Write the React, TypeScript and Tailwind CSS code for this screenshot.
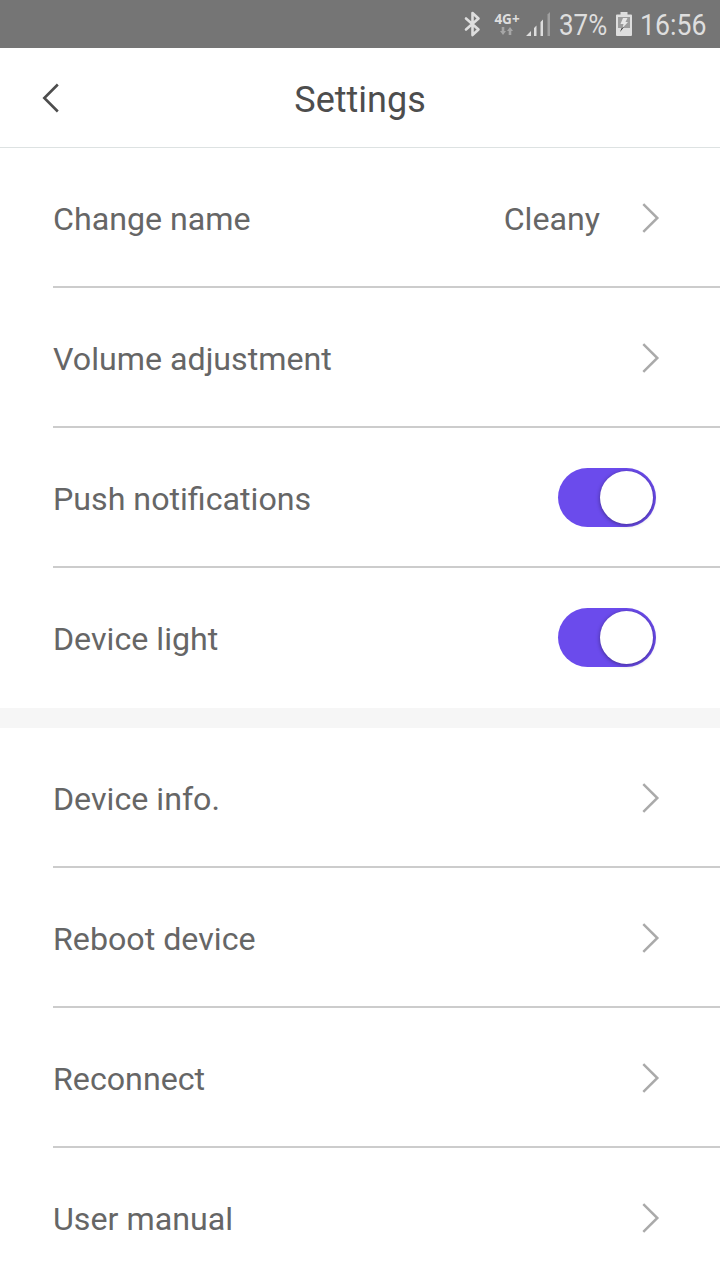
import { useState } from "react";

type Row = {
  label: string;
  value?: string;
  toggle?: boolean;
};

const groups: Row[][] = [
  [
    { label: "Change name", value: "Cleany" },
    { label: "Volume adjustment" },
    { label: "Push notifications", toggle: true },
    { label: "Device light", toggle: true },
  ],
  [
    { label: "Device info." },
    { label: "Reboot device" },
    { label: "Reconnect" },
    { label: "User manual" },
  ],
];

function StatusBar() {
  return (
    <div className="flex h-12 items-center justify-end bg-[#757575] pr-[13px] text-[#dedede]">
      <svg className="mr-[12px] h-7 w-[19px]" viewBox="0 0 19 28" fill="none" stroke="currentColor" strokeWidth="2.6" strokeLinejoin="round" strokeLinecap="round" aria-hidden>
        <path d="M3 8.5 15.5 19.5 9.5 25V3L15.5 8.5 3 19.5" />
      </svg>
      <div className="mr-[6px] flex h-7 w-[26px] flex-col items-center">
        <span className="mt-[3px] font-['Open_Sans',sans-serif] text-[13.5px] leading-[13px] font-bold">4G+</span>
        <svg className="mt-[1px] h-[9px] w-[14px] text-[#a6a6a6]" viewBox="0 0 14 9" fill="currentColor" aria-hidden>
          <path d="M1.7 0h2.6v4H6L3 8 0 4h1.7zM8.7 8h2.6V4H13l-3-4-3 4h1.7z" />
        </svg>
      </div>
      <svg className="mr-[9px] h-6 w-6" viewBox="0 0 24 24" fill="currentColor" aria-hidden>
        <path d="M0 24l5-5v5zM8 16l2.5-2.5V24H8zM14.5 10l2.5-2.5V24h-2.5z" />
        <path d="M21.5 2.5 24 0v24h-2.5z" fill="#a0a0a0" />
      </svg>
      <div className="mr-[9px] w-12 text-[30px] leading-[48px]">
        <span className="block origin-left scale-x-[0.865] pt-[2px] whitespace-nowrap">37%</span>
      </div>
      <svg className="mr-[8px] h-6 w-4" viewBox="0 0 16 24" aria-hidden>
        <path d="M4.5 0h7v2.5H15a1 1 0 0 1 1 1V23a1 1 0 0 1-1 1H1a1 1 0 0 1-1-1V3.5a1 1 0 0 1 1-1h3.5z" fill="#dedede" />
        <path d="M2 5h12v11H2z" fill="#9c9c9c" />
        <path d="M7 6h4.500L9.500 10H12l-5.500 6L7.500 12H4.500z" fill="#e6e6e6" />
        <path d="m8 15-4 5 1.500-3.800z" fill="#303030" />
      </svg>
      <div className="w-[67px] text-[30px] leading-[48px]">
        <span className="block origin-left scale-x-[0.89] pt-[2px] whitespace-nowrap">16:56</span>
      </div>
    </div>
  );
}

function Header() {
  return (
    <header className="relative flex h-[100px] items-center justify-center border-b border-[#dde2e2]">
      <button type="button" aria-label="Back" className="absolute top-[34px] left-[40px]">
        <svg className="h-8 w-5 text-[#4d4d4d]" viewBox="0 0 20 32" fill="none" stroke="currentColor" strokeWidth="2.6" aria-hidden>
          <path d="M17.8 2.5 4.3 16l13.5 13.5" />
        </svg>
      </button>
      <h1 className="pt-[4px] text-[36px] leading-[42px] text-[#4d4d4d]">Settings</h1>
    </header>
  );
}

function Chevron() {
  return (
    <svg className="h-8 w-5 text-[#aaaaaa]" viewBox="0 0 20 32" fill="none" stroke="currentColor" strokeWidth="2.5" aria-hidden>
      <path d="M3.3 3.2 17.3 17 3.3 30.8" />
    </svg>
  );
}

function Toggle({ label }: { label: string }) {
  const [on, setOn] = useState(true);
  return (
    <button
      type="button"
      role="switch"
      aria-label={label}
      aria-checked={on}
      onClick={() => setOn(!on)}
      className={`mr-[4px] flex h-[59px] w-[98px] items-center rounded-full px-[3px] ${on ? "justify-end bg-[#6b4bec]" : "justify-start bg-[#cccccc]"}`}
    >
      <span className="size-[53px] rounded-full bg-white shadow-[0_1px_4px_rgba(0,0,0,0.4)]" />
    </button>
  );
}

function SettingsRow({ row, last }: { row: Row; last: boolean }) {
  return (
    <li className={`ml-[53px] flex h-[140px] items-center justify-between border-b-2 pr-[60px] ${last ? "border-transparent" : "border-[#cccccc]"}`}>
      <span className="pt-[4px]">{row.label}</span>
      {row.toggle ? (
        <Toggle label={row.label} />
      ) : (
        <div className="flex items-center gap-[40px]">
          {row.value && <span className="pt-[4px]">{row.value}</span>}
          <Chevron />
        </div>
      )}
    </li>
  );
}

export default function App() {
  return (
    <div className="h-[1280px] w-[720px] overflow-hidden bg-white font-[Roboto,sans-serif]">
      <StatusBar />
      <Header />
      <main className="flex flex-col gap-5 bg-[#f6f6f6] text-[32.2px] leading-[42px] text-[#666666]">
        {groups.map((rows, i) => (
          <ul key={i} className="bg-white">
            {rows.map((row, j) => (
              <SettingsRow key={row.label} row={row} last={j === rows.length - 1} />
            ))}
          </ul>
        ))}
      </main>
    </div>
  );
}
